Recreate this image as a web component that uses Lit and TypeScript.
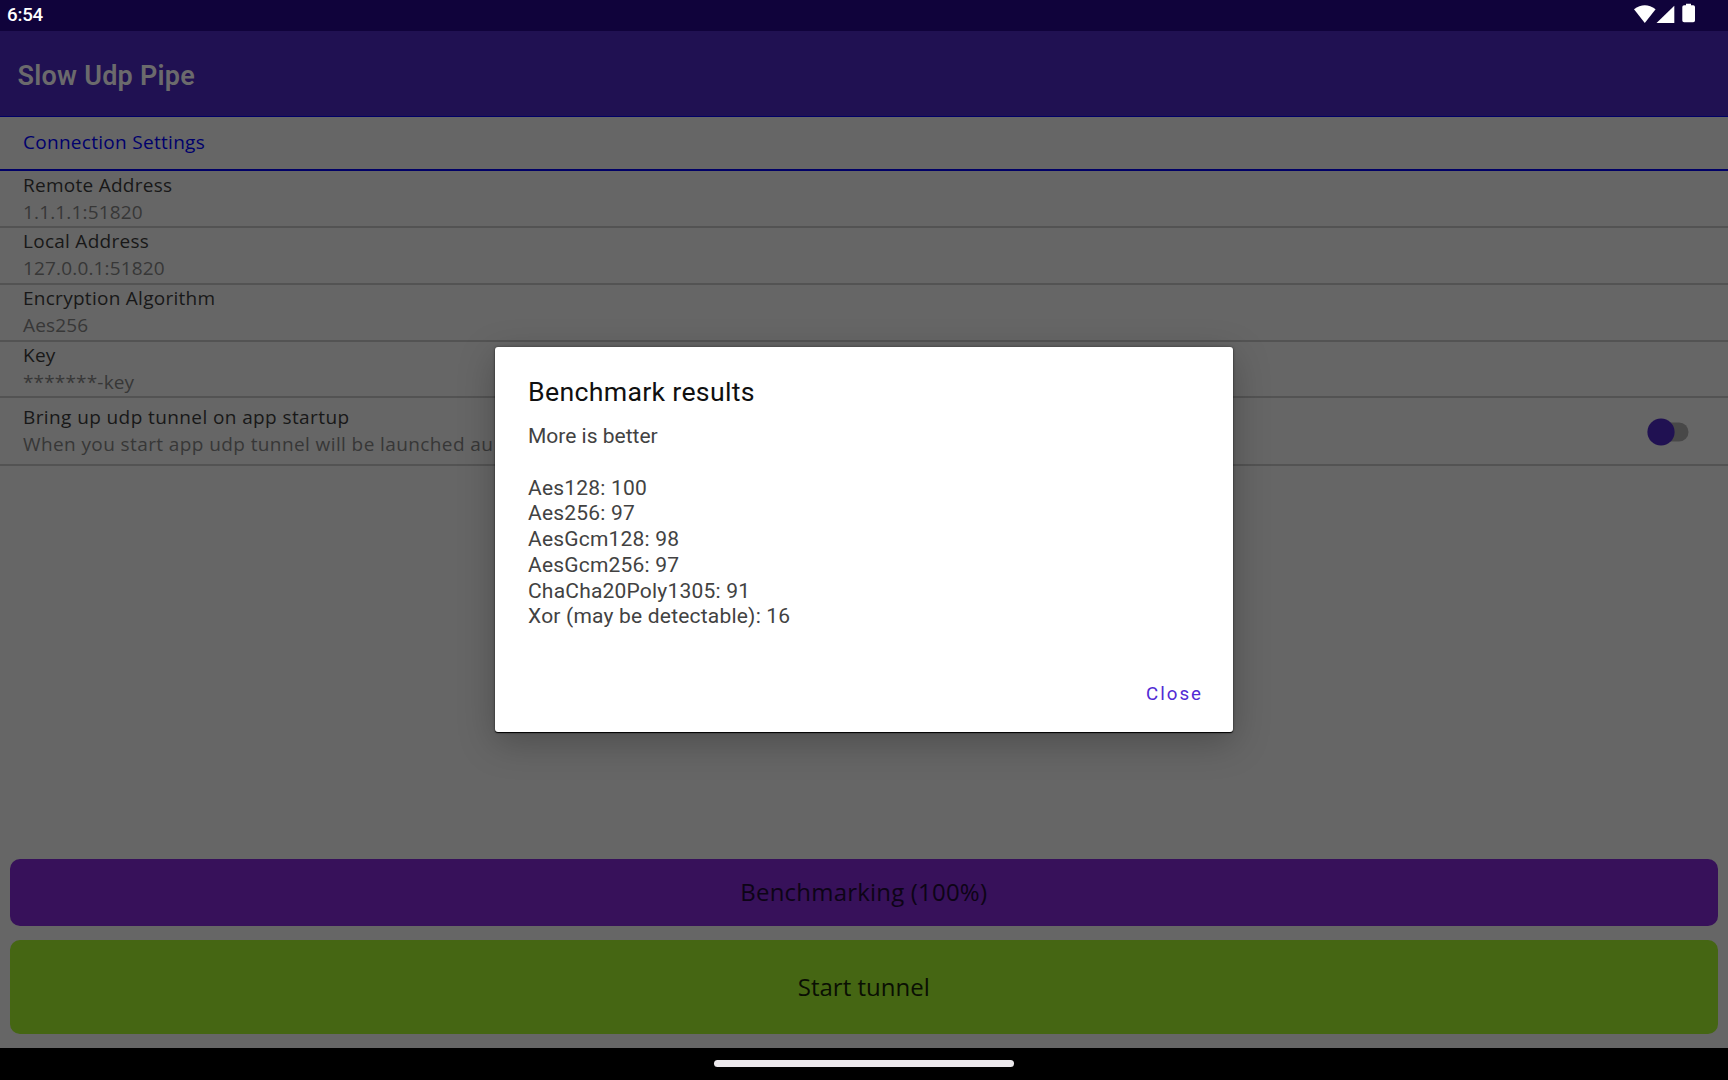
import { LitElement, html, css } from "lit";
import { customElement } from "lit/decorators.js";

interface Setting { title: string; value: string; }

const SETTINGS: Setting[] = [
  { title: "Remote Address", value: "1.1.1.1:51820" },
  { title: "Local Address", value: "127.0.0.1:51820" },
  { title: "Encryption Algorithm", value: "Aes256" },
  { title: "Key", value: "*******-key" },
];

const RESULTS: [string, number][] = [
  ["Aes128", 100],
  ["Aes256", 97],
  ["AesGcm128", 98],
  ["AesGcm256", 97],
  ["ChaCha20Poly1305", 91],
  ["Xor (may be detectable)", 16],
];

@customElement("app-root")
export class AppRoot extends LitElement {
  static styles = css`
    :host { display: block; }
    * { box-sizing: border-box; }
    .screen {
      position: relative; width: 1728px; height: 1080px; overflow: hidden;
      display: flex; flex-direction: column; background: #666;
      font-family: "Open Sans", sans-serif; font-size: 19px; line-height: 27px;
    }
    .status {
      height: 31px; flex: none; background: #10033b; color: #fff;
      display: flex; justify-content: space-between;
      padding: 0 32px 0 7px;
      font: 500 18.7px/30px Roboto, sans-serif; letter-spacing: -.2px;
    }
    .icons { width: 64px; height: 31px; }
    .bar {
      height: 85.2px; flex: none; background: #201152; color: #6b6a6c;
      padding: 2px 0 0 17.5px; font: 600 27px/86px Roboto, sans-serif; letter-spacing: .25px;
    }
    .head {
      flex: none; height: 54.8px; padding: 11.8px 23px 0;
      border-top: 1px solid #000066; border-bottom: 2px solid #000066;
      color: #00006c; letter-spacing: .29px;
    }
    .row { flex: none; height: 56.85px; padding: .5px 23px 0; border-bottom: 2px solid #535353; }
    .row:nth-of-type(4) { padding-top: 1px; }
    .row .title { letter-spacing: .27px; }
    .row .value { letter-spacing: .16px; }
    .switch-row {
      flex: none; height: 67.6px; padding: 5.5px 39px 0 23px; letter-spacing: .4px;
      display: flex; justify-content: space-between; border-bottom: 2px solid #535353;
    }
    .title { color: #181818; }
    .value { color: #373737; white-space: nowrap; }
    .toggle { width: 42px; height: 28px; margin-top: 14px; }
    .spacer { flex: 1; }
    .actions { flex: none; padding: 0 10px 0 9.5px; display: grid; gap: 14px; margin-bottom: 14px; font-size: 24px; text-align: center; }
    .bench { height: 67px; line-height: 65px; border-radius: 10px; background: #37115a; color: #0d0416; letter-spacing: .2px; }
    .start { height: 94px; line-height: 94px; border-radius: 10px; background: #456613; color: #0a0f03; }
    .nav { flex: none; height: 32px; background: #000; display: flex; justify-content: center; padding-top: 12px; }
    .pill { width: 300px; height: 7px; border-radius: 4px; background: #ece9ec; }
    .dialog {
      position: absolute; left: 495px; top: 347px; width: 738px; height: 384.5px;
      background: #fff; border-radius: 3px; padding: 28.8px 30px 0 33px;
      box-shadow: 0 1px 1px #000, 0 0 3px rgba(0,0,0,.4), 0 10px 36px rgba(0,0,0,.25);
      font-family: Roboto, sans-serif; display: flex; flex-direction: column;
    }
    .dtitle { font-size: 26.7px; line-height: 32px; letter-spacing: .3px; color: #101010; font-weight: 400; }
    .body { margin-top: 16.4px; font-size: 21px; line-height: 25.73px; letter-spacing: .2px; color: #424242; }
    .note { margin-bottom: 25.73px; letter-spacing: 0; }
    .close { align-self: flex-end; margin-top: 52px; font-size: 18.7px; line-height: 24px; font-weight: 450; letter-spacing: 2px; color: #512bd4; }
  `;

  render() {
    return html`<div class="screen">
      <div class="status"><span>6:54</span>
        <svg class="icons" viewBox="0 0 64 31">
          <path fill="#fff" d="M2 9.3Q12.8 1.2 23.6 9.3L12.8 23z" />
          <path fill="#fff" d="M42.3 5.8V23H24.5z" />
          <path fill="#fff" d="M54 5.2V3.8h5v1.4h2.2q1.8 0 1.8 1.8v13.4q0 1.8-1.8 1.8h-9.1q-1.8 0-1.8-1.8V7q0-1.8 1.8-1.8z" />
        </svg>
      </div>
      <div class="bar">Slow Udp Pipe</div>
      <div class="head">Connection Settings</div>
      ${SETTINGS.map((s) => html`<div class="row"><div class="title">${s.title}</div><div class="value">${s.value}</div></div>`)}
      <div class="switch-row">
        <div>
          <div class="title">Bring up udp tunnel on app startup</div>
          <div class="value">When you start app udp tunnel will be launched au</div>
        </div>
        <svg class="toggle" viewBox="0 0 42 28">
          <rect x="8" y="4.5" width="33.5" height="19" rx="9.5" fill="#484848" />
          <circle cx="14" cy="14" r="13.6" fill="#201152" />
        </svg>
      </div>
      <div class="spacer"></div>
      <div class="actions">
        <div class="bench">Benchmarking (100%)</div>
        <div class="start">Start tunnel</div>
      </div>
      <div class="nav"><div class="pill"></div></div>
      <div class="dialog">
        <div class="dtitle">Benchmark results</div>
        <div class="body">
          <div class="note">More is better</div>
          ${RESULTS.map(([name, score]) => html`<div>${name}: ${score}</div>`)}
        </div>
        <div class="close">Close</div>
      </div>
    </div>`;
  }
}
